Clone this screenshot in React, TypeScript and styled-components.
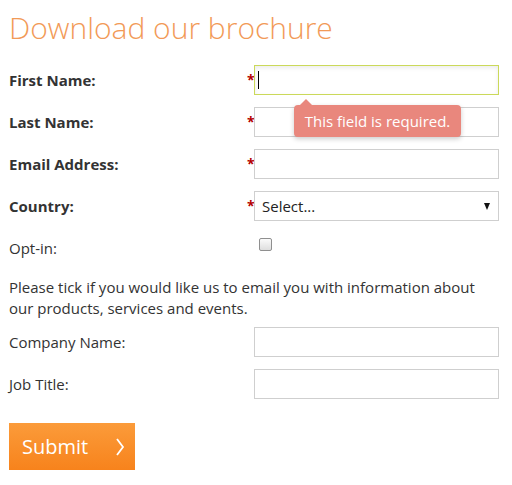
import styled, { createGlobalStyle } from 'styled-components';

const GlobalStyle = createGlobalStyle`
  body {
    margin: 0;
    background: #fff;
    font-family: 'Open Sans', 'Noto Sans', sans-serif;
    color: #333;
  }
`;

const Page = styled.div`
  padding: 0 9px;
  width: 490px;
`;

const Title = styled.h1`
  margin: 10px 0 19px;
  font-size: 30px;
  font-weight: 300;
  line-height: 36px;
  color: #f29a57;
`;

const Form = styled.form`
  display: flex;
  flex-direction: column;
`;

const Row = styled.div<{ $gap?: number }>`
  display: grid;
  grid-template-columns: 238px 7px 245px;
  align-items: center;
  min-height: 30px;
  margin-bottom: ${(p) => p.$gap ?? 12}px;
`;

const Label = styled.label<{ $bold?: boolean }>`
  font-size: 15px;
  font-weight: ${(p) => (p.$bold ? 700 : 400)};
  color: #333;
`;

const Star = styled.span`
  color: #b30000;
  font-size: 14px;
  font-weight: 700;
  align-self: start;
  margin-top: 5px;
`;

const Field = styled.div`
  position: relative;
  grid-column: 3;
`;

const Input = styled.input<{ $focus?: boolean }>`
  box-sizing: border-box;
  width: 245px;
  height: 30px;
  border: 1px solid ${(p) => (p.$focus ? '#cbd95a' : '#cfcfcf')};
  box-shadow: ${(p) => (p.$focus ? 'inset 0 2px 4px rgba(0,0,0,0.08)' : 'none')};
  padding: 0 6px;
  font: inherit;
  font-size: 15px;
  outline: none;
  display: block;
`;

const Caret = styled.span`
  position: absolute;
  left: 4px;
  top: 6px;
  width: 1px;
  height: 18px;
  background: #000;
`;

const Select = styled.div`
  box-sizing: border-box;
  width: 245px;
  height: 30px;
  border: 1px solid #cfcfcf;
  display: flex;
  align-items: center;
  justify-content: space-between;
  padding: 0 6px 0 7px;
  font-size: 15px;
  color: #222;
`;

const Arrow = styled.span`
  width: 0;
  height: 0;
  border-left: 3.5px solid transparent;
  border-right: 3.5px solid transparent;
  border-top: 7px solid #111;
  margin-right: 2px;
`;

const Tooltip = styled.div`
  position: absolute;
  left: 40px;
  top: 40px;
  width: 167px;
  height: 32px;
  box-sizing: border-box;
  background: #e9877d;
  border-radius: 4px;
  box-shadow: 0 2px 5px rgba(0, 0, 0, 0.2);
  color: #fff;
  font-size: 15px;
  white-space: nowrap;
  display: flex;
  align-items: center;
  justify-content: center;
  z-index: 2;

  &::before {
    content: '';
    position: absolute;
    left: 6px;
    top: -6px;
    border-left: 6px solid transparent;
    border-right: 6px solid transparent;
    border-bottom: 6px solid #e9877d;
  }
`;

const Check = styled.span`
  display: block;
  width: 11px;
  height: 11px;
  border: 1px solid #8f8f8f;
  border-radius: 2px;
  background: linear-gradient(#fafafa, #dedede);
  margin: -7px 0 0 5px;
`;

const Note = styled.p`
  margin: 14px 0 8px;
  font-size: 15px;
  line-height: 21px;
  color: #333;
`;

const Submit = styled.button`
  margin-top: 12px;
  width: 126px;
  height: 47px;
  border: none;
  padding: 0 10px 0 13px;
  background: linear-gradient(#fb9b3a, #f7831c);
  color: #fff;
  font: inherit;
  font-size: 20px;
  display: flex;
  align-items: center;
  justify-content: space-between;
  cursor: pointer;
`;

const fields = [
  { label: 'First Name:', focus: true },
  { label: 'Last Name:' },
  { label: 'Email Address:' },
];

export default function App() {
  return (
    <>
      <GlobalStyle />
      <Page>
        <Title>Download our brochure</Title>
        <Form onSubmit={(e) => e.preventDefault()}>
          {fields.map((f) => (
            <Row key={f.label}>
              <Label $bold>{f.label}</Label>
              <Star>*</Star>
              <Field>
                <Input $focus={f.focus} />
                {f.focus && (
                  <>
                    <Caret />
                    <Tooltip>This field is required.</Tooltip>
                  </>
                )}
              </Field>
            </Row>
          ))}
          <Row>
            <Label $bold>Country:</Label>
            <Star>*</Star>
            <Field>
              <Select>
                <span>Select...</span>
                <Arrow />
              </Select>
            </Field>
          </Row>
          <Row $gap={0}>
            <Label>Opt-in:</Label>
            <span />
            <Field>
              <Check />
            </Field>
          </Row>
          <Note>
            Please tick if you would like us to email you with information about our products,
            services and events.
          </Note>
          <Row>
            <Label>Company Name:</Label>
            <span />
            <Field>
              <Input />
            </Field>
          </Row>
          <Row>
            <Label>Job Title:</Label>
            <span />
            <Field>
              <Input />
            </Field>
          </Row>
          <Submit type="submit">
            <span>Submit</span>
            <svg width="10" height="20" viewBox="0 0 10 20">
              <polyline points="2,2 8,10 2,18" fill="none" stroke="#fff" strokeWidth="1.8" />
            </svg>
          </Submit>
        </Form>
      </Page>
    </>
  );
}
